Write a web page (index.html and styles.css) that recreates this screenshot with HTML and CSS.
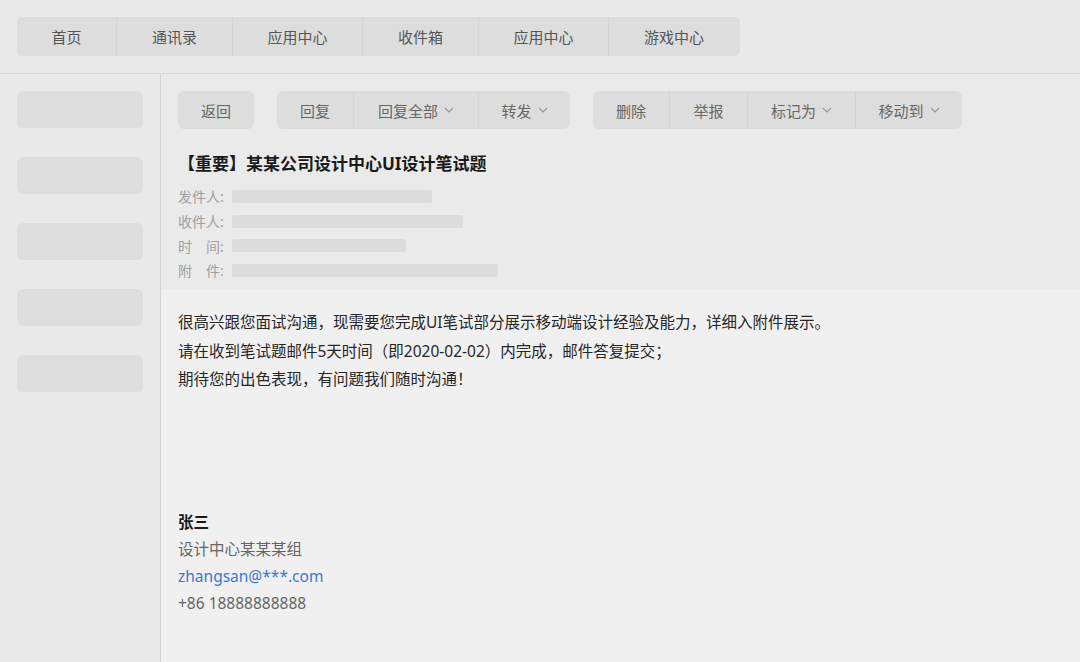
FILE: index.html
```html
<!DOCTYPE html>
<html lang="zh-CN">
  <head>
    <meta charset="UTF-8" />
    <meta name="viewport" content="width=device-width, initial-scale=1.0" />
    <title>邮件详情</title>
    <link rel="stylesheet" href="styles.css">
  </head>
  <body>
    <header class="top-bar">
      <nav class="tabs">
        <a class="tab tab-home">首页</a>
        <a class="tab tab-contacts">通讯录</a>
        <a class="tab tab-wide">应用中心</a>
        <a class="tab tab-contacts">收件箱</a>
        <a class="tab tab-wide">应用中心</a>
        <a class="tab tab-wide">游戏中心</a>
      </nav>
    </header>

    <div class="layout">
      <aside class="sidebar">
        <div class="side-item"></div>
        <div class="side-item"></div>
        <div class="side-item"></div>
        <div class="side-item"></div>
        <div class="side-item"></div>
      </aside>

      <main class="mail">
        <section class="mail-head">
          <div class="toolbar">
            <div class="btn-group">
              <button class="btn btn-back">返回</button>
            </div>
            <div class="btn-group">
              <button class="btn w76">回复</button>
              <button class="btn w125">回复全部 <svg class="chev" viewBox="0 0 10 6"><polyline points="1,1 5,5 9,1" /></svg></button>
              <button class="btn w92">转发 <svg class="chev" viewBox="0 0 10 6"><polyline points="1,1 5,5 9,1" /></svg></button>
            </div>
            <div class="btn-group">
              <button class="btn w76">删除</button>
              <button class="btn w78">举报</button>
              <button class="btn w108">标记为 <svg class="chev" viewBox="0 0 10 6"><polyline points="1,1 5,5 9,1" /></svg></button>
              <button class="btn w107">移动到 <svg class="chev" viewBox="0 0 10 6"><polyline points="1,1 5,5 9,1" /></svg></button>
            </div>
          </div>

          <h1 class="subject">【重要】某某公司设计中心UI设计笔试题</h1>

          <div class="meta">
            <div class="meta-row"><span class="meta-label">发件人:</span><span class="meta-bar" style="width: 200px"></span></div>
            <div class="meta-row"><span class="meta-label">收件人:</span><span class="meta-bar" style="width: 231px"></span></div>
            <div class="meta-row"><span class="meta-label">时&emsp;间:</span><span class="meta-bar" style="width: 174px"></span></div>
            <div class="meta-row"><span class="meta-label">附&emsp;件:</span><span class="meta-bar" style="width: 266px"></span></div>
          </div>
        </section>

        <section class="mail-body">
          <p>很高兴跟您面试沟通，现需要您完成UI笔试部分展示移动端设计经验及能力，详细入附件展示。</p>
          <p>请在收到笔试题邮件5天时间（即2020-02-02）内完成，邮件答复提交；</p>
          <p>期待您的出色表现，有问题我们随时沟通！</p>

          <div class="signature">
            <div class="sig-name">张三</div>
            <div>设计中心某某某组</div>
            <div class="sig-mail">zhangsan@***.com</div>
            <div>+86 18888888888</div>
          </div>
        </section>
      </main>
    </div>
  </body>
</html>
```

FILE: styles.css
```css
body {
  margin: 0;
  font-family: "Noto Sans", "Noto Sans CJK SC", sans-serif;
  background-color: #e9e9e9;
  color: #333;
  height: 662px;
  overflow: hidden;
}
.top-bar {
  height: 74px;
  box-sizing: border-box;
  padding: 17px 17px 0;
  border-bottom: 1px solid #dadada;
}
.tabs {
  display: flex;
  width: 723px;
  height: 39px;
  background-color: #dddddd;
  border-radius: 5px;
  overflow: hidden;
}
.tab {
  display: flex;
  align-items: center;
  justify-content: center;
  font-size: 15px;
  color: #555;
  border-left: 1px solid #d4d4d4;
  box-sizing: border-box;
}
.tab:first-child {
  border-left: none;
}
.tab-home {
  width: 99px;
}
.tab-contacts {
  width: 116px;
}
.tab-wide {
  width: 130px;
}
.tab-wide:last-child {
  width: 131px;
}
.layout {
  display: flex;
  height: 588px;
}
.sidebar {
  width: 161px;
  box-sizing: border-box;
  border-right: 1px solid #d2d2d2;
  padding: 17px 17px 0;
  display: flex;
  flex-direction: column;
  gap: 29px;
}
.side-item {
  width: 126px;
  height: 37px;
  border-radius: 6px;
  background-color: #dedede;
}
.mail {
  flex: 1;
  display: flex;
  flex-direction: column;
}
.mail-head {
  background-color: #eaeaea;
  padding: 17px 0 0 17px;
  height: 215px;
  box-sizing: border-box;
}
.toolbar {
  display: flex;
  gap: 23px;
}
.btn-group {
  display: flex;
  height: 38px;
  background-color: #dddddd;
  border-radius: 6px;
  overflow: hidden;
}
.btn {
  border: none;
  background: none;
  font-family: inherit;
  font-size: 15px;
  color: #666;
  padding: 0;
  height: 38px;
  display: flex;
  align-items: center;
  justify-content: center;
  gap: 6px;
  border-left: 1px solid #d3d3d3;
  box-sizing: border-box;
}
.btn:first-child {
  border-left: none;
}
.btn-back {
  width: 76px;
}
.w76 { width: 76px; }
.w78 { width: 78px; }
.w92 { width: 92px; }
.w107 { width: 107px; }
.w108 { width: 108px; }
.w125 { width: 125px; }
.chev {
  width: 10px;
  height: 6px;
  fill: none;
  stroke: #999;
  stroke-width: 1.2;
}
.subject {
  margin: 23px 0 0;
  font-size: 17px;
  font-weight: bold;
  color: #1a1a1a;
  line-height: 24px;
}
.meta {
  margin-top: 8px;
  display: flex;
  flex-direction: column;
}
.meta-row {
  display: flex;
  align-items: center;
  height: 24.7px;
}
.meta-label {
  width: 54px;
  font-size: 14px;
  color: #a0a0a0;
}
.meta-bar {
  height: 13px;
  border-radius: 2px;
  background-color: #dcdcdc;
}
.mail-body {
  flex: 1;
  background-color: #f0f0f0;
  padding: 19px 0 0 17px;
}
.mail-body p {
  margin: 0;
  font-size: 15.5px;
  line-height: 28.5px;
  color: #262626;
}
.signature {
  margin-top: 115px;
  font-size: 15.5px;
  line-height: 27px;
  color: #666;
}
.sig-name {
  font-weight: bold;
  color: #1a1a1a;
}
.sig-mail {
  color: #3a78cf;
}
```
